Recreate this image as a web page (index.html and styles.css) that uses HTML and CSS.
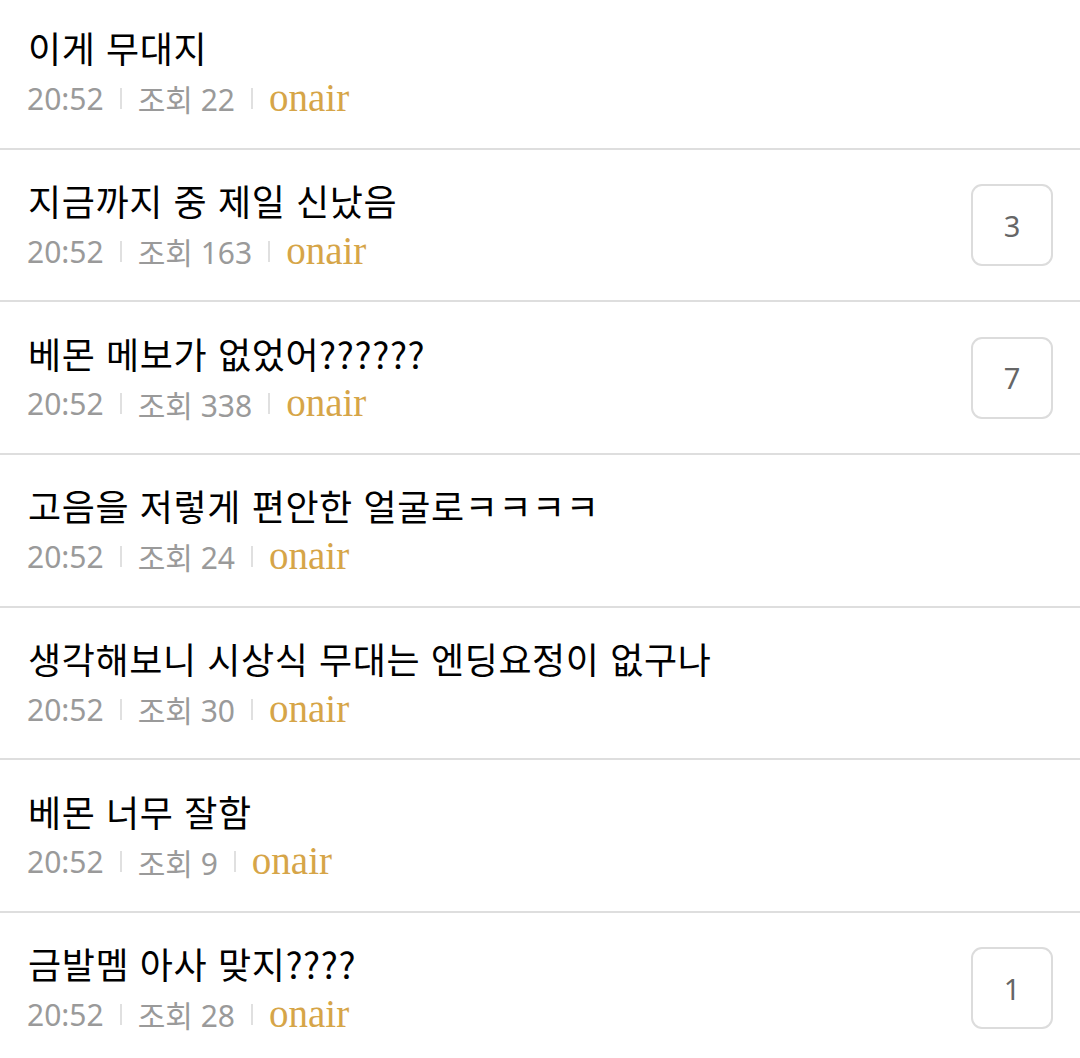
FILE: index.html
```html
<!DOCTYPE html>
<html lang="ko">
<head>
  <meta charset="UTF-8">
  <meta name="viewport" content="width=device-width, initial-scale=1.0">
  <title>게시판</title>
  <link rel="stylesheet" href="styles.css">
</head>
<body>
  <ul class="board">
    <li class="post">
      <div class="post-body">
        <div class="post-title">이게 무대지</div>
        <div class="post-meta">
          <span class="time">20:52</span><span class="bar"></span><span class="views">조회 22</span><span class="bar"></span><span class="author">onair</span>
        </div>
      </div>
    </li>
    <li class="post">
      <div class="post-body">
        <div class="post-title">지금까지 중 제일 신났음</div>
        <div class="post-meta">
          <span class="time">20:52</span><span class="bar"></span><span class="views">조회 163</span><span class="bar"></span><span class="author">onair</span>
        </div>
      </div>
      <div class="comments">3</div>
    </li>
    <li class="post">
      <div class="post-body">
        <div class="post-title">베몬 메보가 없었어??????</div>
        <div class="post-meta">
          <span class="time">20:52</span><span class="bar"></span><span class="views">조회 338</span><span class="bar"></span><span class="author">onair</span>
        </div>
      </div>
      <div class="comments">7</div>
    </li>
    <li class="post">
      <div class="post-body">
        <div class="post-title">고음을 저렇게 편안한 얼굴로ㅋㅋㅋㅋ</div>
        <div class="post-meta">
          <span class="time">20:52</span><span class="bar"></span><span class="views">조회 24</span><span class="bar"></span><span class="author">onair</span>
        </div>
      </div>
    </li>
    <li class="post">
      <div class="post-body">
        <div class="post-title">생각해보니 시상식 무대는 엔딩요정이 없구나</div>
        <div class="post-meta">
          <span class="time">20:52</span><span class="bar"></span><span class="views">조회 30</span><span class="bar"></span><span class="author">onair</span>
        </div>
      </div>
    </li>
    <li class="post">
      <div class="post-body">
        <div class="post-title">베몬 너무 잘함</div>
        <div class="post-meta">
          <span class="time">20:52</span><span class="bar"></span><span class="views">조회 9</span><span class="bar"></span><span class="author">onair</span>
        </div>
      </div>
    </li>
    <li class="post">
      <div class="post-body">
        <div class="post-title">금발멤 아사 맞지????</div>
        <div class="post-meta">
          <span class="time">20:52</span><span class="bar"></span><span class="views">조회 28</span><span class="bar"></span><span class="author">onair</span>
        </div>
      </div>
      <div class="comments">1</div>
    </li>
  </ul>
</body>
</html>
```

FILE: styles.css
```css
* {
  box-sizing: border-box;
}

body {
  margin: 0;
  background: #fff;
  font-family: "Noto Sans", "Noto Sans CJK KR", sans-serif;
}

/* list is scrolled a few pixels up in the screenshot */
.board {
  list-style: none;
  margin: -3px 0 0;
  padding: 0;
}

.post {
  display: flex;
  align-items: center;
  height: 152.7px;
  padding: 0 27px 0 28px;
  border-bottom: 2px solid #dedede;
}

.post-body {
  flex: 1;
  padding-bottom: 1px;
}

.post-title {
  font-family: "Noto Sans CJK KR", sans-serif;
  font-size: 36px;
  line-height: 44px;
  letter-spacing: 0.6px;
  color: #000;
}

.post-meta {
  display: flex;
  align-items: center;
  margin-top: 9px;
  height: 40px;
  font-size: 30px;
  color: #9a9a9a;
  margin-left: -1px;
}

.bar {
  width: 2px;
  height: 21px;
  margin: 0 16px;
  background: #e0e0e0;
}

.author {
  font-family: "Liberation Serif", serif;
  font-size: 39px;
  color: #d6a548;
  position: relative;
  top: -1px;
}

.comments {
  width: 82px;
  height: 82px;
  border: 2px solid #dcdcdc;
  border-radius: 11px;
  display: flex;
  align-items: center;
  justify-content: center;
  font-size: 29px;
  color: #666;
}
```
